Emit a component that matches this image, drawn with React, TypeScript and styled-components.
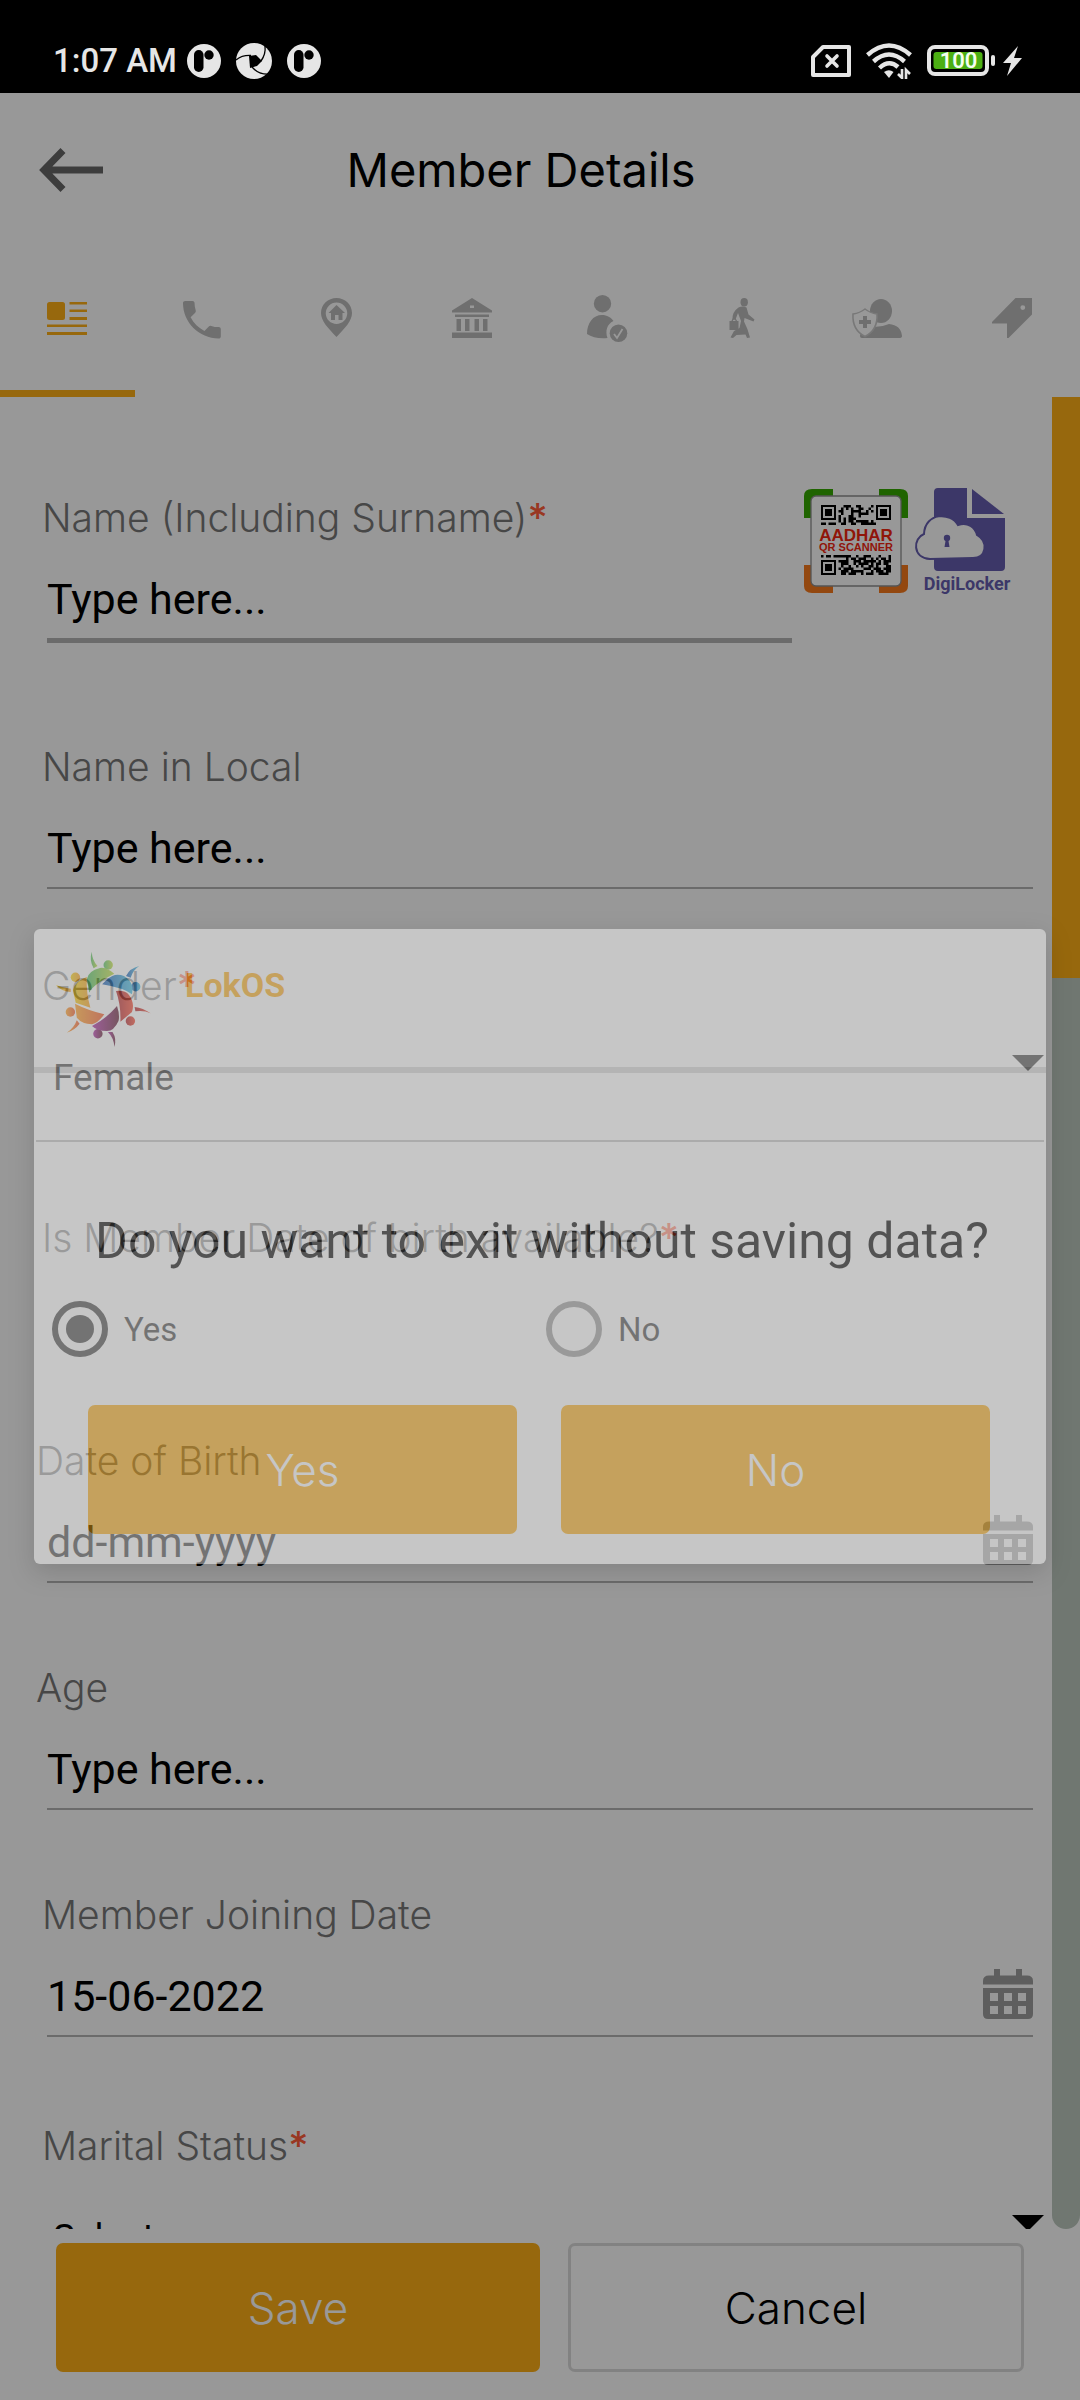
import React, { useId } from "react";
import styled, { createGlobalStyle } from "styled-components";

const amber = "#fcae17";
const line = "#b2b2b2";
const display = '"Inter", "Liberation Sans", sans-serif';
const body = '"Roboto", "Liberation Sans", sans-serif';

const GlobalStyle = createGlobalStyle`
  * { box-sizing: border-box; }
  body { margin: 0; background: #fefefe; font-family: ${body}; color: #000; }
  button, input, select { font: inherit; color: inherit; border: 0; padding: 0; margin: 0; background: none; border-radius: 0; }
  svg { display: block; flex: none; }
`;

/* ---------- shell ---------- */

const Shell = styled.div`
  height: 100vh;
  display: flex;
  flex-direction: column;
  overflow: hidden;
`;

const StatusBar = styled.div`
  flex: none;
  height: 93px;
  padding: 28px 58px 0 53px;
  display: flex;
  align-items: center;
  justify-content: space-between;
  background: #000;
  color: #e6e6e6;
`;

const StatusGroup = styled.div<{ $gap: number }>`
  display: flex;
  align-items: center;
  gap: ${(p) => p.$gap}px;
`;

const Clock = styled.span`
  font-size: 33px;
  line-height: 40px;
  font-weight: 500;
  margin-right: -5px;
`;

const Screen = styled.div`
  position: relative;
  flex: 1;
  min-height: 0;
  display: flex;
  flex-direction: column;
`;

const Header = styled.header`
  flex: none;
  height: 154px;
  padding: 0 141px 0 39px;
  display: flex;
  align-items: center;
`;

const Title = styled.h1`
  flex: 1;
  margin: 0;
  text-align: center;
  font-family: ${display};
  font-weight: 400;
  font-size: 47px;
  line-height: 56px;
`;

const IconButton = styled.button`
  display: flex;
  align-items: center;
  justify-content: center;
`;

const Tabs = styled.nav`
  flex: none;
  display: grid;
  grid-template-columns: repeat(8, 1fr);
`;

const Tab = styled.button<{ $active?: boolean }>`
  height: 150px;
  padding: 0 2px 2px 0;
  display: flex;
  align-items: center;
  justify-content: center;
  color: ${(p) => (p.$active ? amber : "#b9b9b9")};
  border-bottom: 7px solid ${(p) => (p.$active ? amber : "transparent")};
`;

/* ---------- form ---------- */

const ScrollRow = styled.div`
  flex: 1;
  min-height: 0;
  display: flex;
`;

const Form = styled.form`
  flex: 1;
  min-width: 0;
  overflow-y: auto;
  scrollbar-width: none;
  padding: 91px 8px 60px 36px;
`;

const ScrollTrack = styled.div`
  flex: none;
  width: 28px;
  background: #bbc6bd;
  border-radius: 0 0 14px 14px;
`;

const ScrollThumb = styled.div`
  height: 31.7%;
  background: ${amber};
`;

const Field = styled.div<{ $top?: number }>`
  flex: 1;
  min-width: 0;
  display: flex;
  flex-direction: column;
  gap: 28px;
  margin-top: ${(p) => p.$top ?? 0}px;
`;

const NameRow = styled.div`
  display: flex;
  align-items: flex-start;
  padding-right: 33px;
  gap: 8px;
`;

const NameCell = styled.div`
  flex: 1;
  min-width: 0;
  display: flex;
  padding-top: 8px;
  margin-right: -7px;
`;

const Label = styled.label<{ $flush?: boolean }>`
  display: block;
  padding-left: ${(p) => (p.$flush ? 0 : 6)}px;
  font-family: ${display};
  font-weight: 300;
  font-size: 39px;
  line-height: 44px;
  color: #777;
  white-space: nowrap;
`;

const Star = styled.span`
  color: #ff5c3a;
  font-weight: 500;
`;

const Underlined = styled.div<{ $bold?: boolean }>`
  display: flex;
  align-items: flex-start;
  margin: 0 11px;
  padding-bottom: 8px;
  border-bottom: ${(p) => (p.$bold ? 5 : 2)}px solid ${line};
`;

const TextInput = styled.input`
  flex: 1;
  min-width: 0;
  height: 62px;
  font-size: 43px;
  outline: none;
  &::placeholder { color: #000; opacity: 1; }
`;

const CalendarButton = styled(IconButton)`
  width: 50px;
  height: 58px;
  color: #9d9d9d;
`;

const SelectBox = styled.div`
  position: relative;
`;

const Select = styled.select`
  appearance: none;
  display: block;
  width: 100%;
  height: 106px;
  padding: 0 60px 20px 17px;
  font-size: 37px;
  line-height: 42px;
  border-bottom: 2px solid #aaa;
`;

const Caret = styled.span`
  position: absolute;
  top: 19px;
  right: 0;
  border: 16px solid transparent;
  border-top-color: #000;
  border-bottom: 0;
  pointer-events: none;
`;

const RadioGroup = styled.div`
  display: grid;
  grid-template-columns: 1fr 1fr;
  padding: 0 4px 0 16px;
`;

const RadioLabel = styled.label`
  display: flex;
  align-items: center;
  gap: 16px;
  height: 82px;
  font-size: 33px;
`;

const Radio = styled.input`
  appearance: none;
  width: 56px;
  height: 56px;
  border: 6px solid #767676;
  border-radius: 50%;
  display: grid;
  place-items: center;
  &:checked { border-color: #000; }
  &:checked::before {
    content: "";
    width: 28px;
    height: 28px;
    border-radius: 50%;
    background: #000;
  }
`;

/* ---------- actions ---------- */

const Footer = styled.footer`
  flex: none;
  display: grid;
  grid-template-columns: 484fr 456fr;
  gap: 28px;
  padding: 14px 56px 28px;
`;

const Button = styled.button<{ $outline?: boolean }>`
  height: 129px;
  border-radius: 7px;
  font-family: ${display};
  font-weight: 300;
  font-size: 44px;
  color: ${(p) => (p.$outline ? "#000" : "#fff")};
  background: ${(p) => (p.$outline ? "transparent" : amber)};
  border: ${(p) => (p.$outline ? "3px solid #d9d9d9" : "0")};
`;

/* ---------- dialog ---------- */

const Scrim = styled.div`
  position: absolute;
  inset: 0;
  display: flex;
  align-items: center;
  padding: 0 34px;
  background: rgba(0, 0, 0, 0.4);
`;

const Dialog = styled.section`
  flex: 1;
  opacity: 0.45;
  background: #fff;
  border-radius: 6px;
  box-shadow: 0 8px 24px rgba(0, 0, 0, 0.3);
`;

const DialogHead = styled.div`
  display: flex;
  align-items: flex-start;
  gap: 33px;
  height: 144px;
  padding: 22px;
  border-bottom: 6px solid #d7d7d7;
`;

const Brand = styled.strong`
  font-size: 34px;
  line-height: 68px;
  font-weight: 700;
  color: ${amber};
`;

const Question = styled.p`
  margin: 138px 0 134px;
  padding-left: 4px;
  text-align: center;
  font-size: 50px;
  line-height: 60px;
`;

const DialogActions = styled.div`
  display: grid;
  grid-template-columns: 1fr 1fr;
  gap: 44px;
  padding: 0 56px 30px 54px;
`;

/* ---------- status bar drawings ---------- */

const ParkIcon = () => (
  <svg width="34" height="34" viewBox="0 0 34 34">
    <circle cx="17" cy="17" r="17" fill="#e6e6e6" />
    <rect x="7" y="6" width="9.5" height="22" rx="4.7" fill="#000" />
    <circle cx="22" cy="11" r="4.7" fill="#000" />
  </svg>
);

const ShutterIcon = () => (
  <svg width="36" height="36" viewBox="0 0 36 36">
    <circle cx="18" cy="18" r="18" fill="#e6e6e6" />
    <path d="M13 13L20 12L26 18L21 23L14 25Z" fill="#000" />
    <g fill="none" stroke="#000" strokeWidth="1.3">
      <path d="M0 17Q6 12 15 12.500" />
      <path d="M29 3Q30 11 25 18" />
      <path d="M34 31Q23 32 16 24" />
    </g>
  </svg>
);

const SimIcon = () => (
  <svg width="40" height="32" viewBox="0 0 40 32" fill="none" stroke="#e6e6e6" strokeLinejoin="round">
    <path d="M12 2H38V30H2V12Z" strokeWidth="4" />
    <path d="M16 11L26 21M26 11L16 21" strokeWidth="3.600" strokeLinecap="round" />
  </svg>
);

const WifiIcon = () => (
  <svg width="46" height="36" viewBox="0 0 46 36" fill="none" stroke="#e6e6e6" strokeWidth="4.400">
    <path d="M1.500 12Q23 -7 44.500 12" />
    <path d="M7.500 18.500Q23 4.500 38.500 18.500" />
    <path d="M13.500 25Q23 16 32 24" />
    <path d="M18 29Q23 25.500 27.500 29L23 35Z" fill="#e6e6e6" stroke="none" />
    <path d="M36 26V35L32 31M40 36V27L44 31" strokeWidth="2.600" />
  </svg>
);

const BatteryIcon = () => (
  <svg width="68" height="31" viewBox="0 0 68 31">
    <rect x="2" y="2" width="58" height="27" rx="6" fill="none" stroke="#e6e6e6" strokeWidth="4" />
    <rect x="6.500" y="7" width="49" height="17" rx="3" fill="#4caf13" />
    <rect x="64" y="10" width="4" height="11" rx="2" fill="#e6e6e6" />
    <text x="31.500" y="23" textAnchor="middle" fontFamily="Roboto" fontWeight="600" fontSize="22" fill="#f4fff0">100</text>
  </svg>
);

const BoltIcon = () => (
  <svg width="19" height="30" viewBox="0 0 19 30">
    <path d="M15 0L0 17H8L4 30L19 12H11Z" fill="#e6e6e6" />
  </svg>
);

/* ---------- app drawings ---------- */

const BackIcon = () => (
  <svg width="64" height="44" viewBox="0 0 64 44" fill="none" stroke="#666" strokeWidth="7">
    <path d="M64 22H6M24 2.500L5 22L24 41.500" />
  </svg>
);

const tabIcons: { name: string; art: React.ReactNode }[] = [
  {
    name: "Profile",
    art: (
      <>
        <rect x="5" y="10" width="18" height="18" rx="2.500" />
        <path d="M27.500 10H45V12.500H27.500ZM27.500 17.500H45V20H27.500ZM27.500 25H45V28H27.500ZM5 32.500H45V35H5ZM5 40H45V43H5Z" />
      </>
    ),
  },
  {
    name: "Phone",
    art: (
      <path
        transform="translate(-.3 2.8) scale(2.1 2.08)"
        d="M6.620 10.790c1.440 2.830 3.760 5.140 6.590 6.590l2.200-2.200c.27-.27.67-.36 1.020-.24 1.120.37 2.330.57 3.570.57.55 0 1 .45 1 1V20c0 .55-.45 1-1 1-9.390 0-17-7.610-17-17 0-.55.45-1 1-1h3.500c.55 0 1 .45 1 1 0 1.250.2 2.450.57 3.570.11.35.03.74-.25 1.020l-2.200 2.200z"
      />
    ),
  },
  {
    name: "Address",
    art: (
      <>
        <path
          fillRule="evenodd"
          d="M24.500 6C33 6 40 12.500 40 21C40 29 33 36 24.500 45C16 36 9 29 9 21C9 12.500 16 6 24.500 6ZM24.500 10.500A10.500 10.500 0 1 0 24.500 32A10.500 10.500 0 1 0 24.500 10.500Z"
        />
        <path d="M24.500 13L33 21H30.500V28H26.500V23H23V28H19V21H16.500Z" />
      </>
    ),
  },
  {
    name: "Bank",
    art: (
      <path
        fillRule="evenodd"
        d="M5 18.500L25 6L45 18.500V20.500H5ZM23 13.500V16H27V13.500ZM8 22.500H42V25H8ZM9.500 27H14V39H9.500ZM18 27H22.500V39H18ZM27.500 27H32V39H27.500ZM36 27H40.500V39H36ZM5 40.500H45V46H5Z"
      />
    ),
  },
  {
    name: "Verification",
    art: (
      <>
        <circle cx="20.500" cy="11.700" r="8.700" />
        <path d="M5 42C5 31 11 23 20 23C25 23 29 25.500 31.500 29C25 32 23 39 25.500 46C18 47 10 45.500 5 42Z" />
        <circle cx="36.500" cy="41.300" r="8.800" />
        <path d="M32 42L35 46L40.500 37" fill="none" stroke="#fefefe" strokeWidth="1.800" />
      </>
    ),
  },
  {
    name: "Occupation",
    art: (
      <>
        <ellipse cx="27.200" cy="10.300" rx="3.700" ry="4.200" />
        <path d="M21.500 15.500Q25.500 13.500 29.500 15.500L31.500 22.500L37.500 27.500L36.500 29.500L27.500 26L27 29.500Q31 37 33 45.500L30 46L28.500 42.500L19.500 43L16 46L13.500 45.500L17 39L22.500 36L24 29L21 21L18.500 27.500H15.500Q15 20 21.500 15.500Z" />
        <path d="M12.500 29H21.500V38H12.500Z" />
        <path d="M15 29Q17 24 19.500 29" fill="none" stroke="currentColor" strokeWidth="1.300" />
      </>
    ),
  },
  {
    name: "Insurance",
    art: (
      <>
        <ellipse cx="29" cy="19" rx="11" ry="12" />
        <path d="M8 44Q8 38 17 34Q28 36 37 32Q49 33 50 44Q50 46 47 46H10Q8 46 8 44Z" />
        <path d="M13 17Q18 21 25 22Q26 38 13 44.500Q0 38 1 22Q8 21 13 17Z" fill="#fefefe" stroke="#c9c9c9" strokeWidth="1.600" />
        <path d="M11 24H15V28H19V32H15V36H11V32H7V28H11Z" />
      </>
    ),
  },
  {
    name: "Tags",
    art: (
      <path
        fillRule="evenodd"
        d="M28.500 6H45V22.500L21.500 46H20V31.500H5V30ZM35.800 13.200A2.400 2.400 0 1 0 35.800 18A2.400 2.400 0 1 0 35.800 13.200Z"
      />
    ),
  },
];

const CalendarIcon = () => (
  <svg width="50" height="50" viewBox="0 0 50 50" fill="currentColor">
    <path d="M11 0H17V6.500H33V0H39V6.500H44Q50 6.500 50 12V15.500H0V12Q0 6.500 6 6.500H11Z" />
    <path
      fillRule="evenodd"
      d="M0 19H50V45Q50 50 45 50H5Q0 50 0 45ZM7 24V32H15V24ZM21 24V32H29V24ZM35 24V32H43V24ZM7 37V45H15V37ZM21 37V45H29V37ZM35 37V45H43V37Z"
    />
  </svg>
);

/* Filler modules of the code between its three finder squares. */
const modules = (() => {
  const cells: string[] = [];
  let seed = 41;
  const size = 2.5;
  for (let row = 0; row < 28; row++) {
    for (let col = 0; col < 28; col++) {
      seed = (seed * 1103515245 + 12345) % 2147483648;
      const dark = seed / 2147483648 > 0.45;
      const inGap = row > 7 && row < 20;
      const inFinder = (row < 7 && (col < 7 || col > 20)) || (row > 20 && col < 7);
      if (dark && !inGap && !inFinder) {
        cells.push(`M${17 + col * size} ${17 + row * size}h${size}v${size}h-${size}z`);
      }
    }
  }
  return cells.join("");
})();

const Finder = ({ x, y }: { x: number; y: number }) => (
  <>
    <rect x={x + 1} y={y + 1} width="13" height="13" fill="none" stroke="#000" strokeWidth="2" />
    <rect x={x + 4} y={y + 4} width="7" height="7" />
  </>
);

const AadharIcon = () => (
  <svg width="104" height="106" viewBox="0 0 104 106">
    <path d="M0 30V8Q0 1 8 1H29V30ZM104 30V8Q104 1 96 1H75V30Z" fill="#34a700" />
    <path d="M0 77V98Q0 105 8 105H29V77ZM104 77V98Q104 105 96 105H75V77Z" fill="#f5781c" />
    <rect x="7" y="8" width="90" height="90" rx="5" fill="#fefefe" stroke="#8d8d8d" strokeWidth="1.300" />
    <path d={modules} />
    <Finder x={17} y={17} />
    <Finder x={72} y={17} />
    <Finder x={17} y={72} />
    <g fill="#f0260f" fontFamily="Liberation Sans, sans-serif" fontWeight="700" textAnchor="middle">
      <text x="52" y="53" fontSize="17">AADHAR</text>
      <text x="52" y="63" fontSize="11">QR SCANNER</text>
    </g>
  </svg>
);

const DigiLockerIcon = () => (
  <svg width="95" height="106" viewBox="0 0 95 106" overflow="visible" fill="#645cad">
    <path d="M22 0H51V30H89V79Q89 83 85 83H22Q18 83 18 79V4Q18 0 22 0Z" />
    <path d="M56 1L88 26H56Z" />
    <path
      d="M14 71C-4 70 -3 50 8 46C9 24 35 24 42 37C52 34 59 39 61 47C73 54 70 70 57 70Z"
      fill="#fefefe"
      stroke="#645cad"
      strokeWidth="2"
    />
    <circle cx="31" cy="50" r="3.200" />
    <path d="M30 50H32L33.500 59H28.500Z" />
    <text x="51" y="102" textAnchor="middle" fontFamily="Roboto, Liberation Sans, sans-serif" fontWeight="700" fontSize="18">
      DigiLocker
    </text>
  </svg>
);

const people = [
  { from: "#3ab650", to: "#b9d52a", head: [52.2, 14], arm: "M35.800 .7Q36 9 41.500 15L37.600 17.300Q33 9 35.800 .7Z", torso: "M58.300 22.700Q50 16 44 17Q32 20 30.800 28.300L33.300 41.700Q36 34 58.300 22.700Z" },
  { from: "#0a4fae", to: "#38bde0", head: [79.700, 35.700], arm: "M83.300 15Q77 19 74.700 26.700L70 25Q74 17 83.300 15Z", torso: "M46.100 33.300Q54 25 59 24Q68 23 73 29Q78 35 76 43.300Q68 37 46.100 33.300Z" },
  { from: "#a51018", to: "#f53a20", head: [74.400, 70], arm: "M94.700 62.300Q87 57 78.600 56L79.400 60.300Q88 59 94.700 62.300Z", torso: "M60 40Q69 39 73 44Q79 52 76 61L64.400 70.700Q65 54 60 40Z" },
  { from: "#a3189a", to: "#50081e", head: [41.900, 82.700], arm: "M58.300 96Q58 87 51.900 81H56.500Q61 88 58.300 96Z", torso: "M36 75Q50 68 61 55Q64 64 62.500 70Q58 80 51 80Q41 80 36 75Z" },
  { from: "#ff9a14", to: "#f04a18", head: [14.400, 61], arm: "M10.800 81.700Q18 77 20.800 69.300L23.600 72.700Q19 79 10.800 81.700Z", torso: "M19 52.700Q31 59 48.300 63.300Q42 72 36 73.300Q26 73 20.800 66.700Z" },
  { from: "#f8d000", to: "#fa9a14", head: [19.400, 26.300], arm: "M0 34Q7 37 14.700 37.700V41Q6 41 0 34Z", torso: "M30.800 26Q19 30 17 39L19.700 51.700L34.400 56.700Q30 42 30.800 26Z" },
] as const;

const LokOSLogo = () => (
  <svg width="96" height="96" viewBox="0 0 96 96" role="img" aria-label="LokOS logo">
    {people.map((p, i) => (
      <g key={i} fill={`url(#person-${i})`}>
        <linearGradient id={`person-${i}`} x1="0" y1="0" x2="1" y2="0">
          <stop offset="0" stopColor={p.from} />
          <stop offset="1" stopColor={p.to} />
        </linearGradient>
        <circle cx={p.head[0]} cy={p.head[1]} r="4.700" />
        <path d={p.arm} />
        <path d={p.torso} />
      </g>
    ))}
  </svg>
);

/* ---------- fields ---------- */

type FieldProps = {
  label: string;
  required?: boolean;
  flush?: boolean;
  bold?: boolean;
  top?: number;
  placeholder?: string;
  value?: string;
  calendar?: boolean;
};

const TextField = ({ label, required, flush, bold, top, placeholder, value, calendar }: FieldProps) => {
  const id = useId();
  return (
    <Field $top={top}>
      <Label htmlFor={id} $flush={flush}>
        {label}
        {required && <Star>*</Star>}
      </Label>
      <Underlined $bold={bold}>
        <TextInput id={id} type="text" placeholder={placeholder} defaultValue={value} />
        {calendar && (
          <CalendarButton type="button" aria-label={`Pick ${label}`}>
            <CalendarIcon />
          </CalendarButton>
        )}
      </Underlined>
    </Field>
  );
};

const SelectField = ({ label, top, options }: { label: string; top: number; options: string[] }) => {
  const id = useId();
  return (
    <Field $top={top}>
      <Label htmlFor={id}>
        {label}
        <Star>*</Star>
      </Label>
      <SelectBox>
        <Select id={id}>
          {options.map((o) => (
            <option key={o}>{o}</option>
          ))}
        </Select>
        <Caret />
      </SelectBox>
    </Field>
  );
};

export default function App() {
  return (
    <Shell>
      <GlobalStyle />
      <StatusBar>
        <StatusGroup $gap={15}>
          <Clock>1:07 AM</Clock>
          <ParkIcon />
          <ShutterIcon />
          <ParkIcon />
        </StatusGroup>
        <StatusGroup $gap={15}>
          <SimIcon />
          <WifiIcon />
          <StatusGroup $gap={8}>
            <BatteryIcon />
            <BoltIcon />
          </StatusGroup>
        </StatusGroup>
      </StatusBar>

      <Screen>
        <Header>
          <IconButton type="button" aria-label="Back">
            <BackIcon />
          </IconButton>
          <Title>Member Details</Title>
        </Header>

        <Tabs>
          {tabIcons.map((t, i) => (
            <Tab key={t.name} type="button" aria-label={t.name} $active={i === 0}>
              <svg width="50" height="52" viewBox="0 0 50 52" fill="currentColor" overflow="visible">
                {t.art}
              </svg>
            </Tab>
          ))}
        </Tabs>

        <ScrollRow>
          <Form>
            <NameRow>
              <NameCell>
                <TextField label="Name (Including Surname)" required bold placeholder="Type here..." />
              </NameCell>
              <IconButton type="button" aria-label="Aadhar QR scanner">
                <AadharIcon />
              </IconButton>
              <IconButton type="button" aria-label="DigiLocker">
                <DigiLockerIcon />
              </IconButton>
            </NameRow>
            <TextField label="Name in Local" top={102} placeholder="Type here..." />
            <SelectField label="Gender" top={75} options={["Female", "Male", "Other"]} />
            <Field $top={74} role="radiogroup" aria-labelledby="dob-known">
              <Label as="div" id="dob-known">
                Is Member Date of birth available?<Star>*</Star>
              </Label>
              <RadioGroup>
                <RadioLabel>
                  <Radio type="radio" name="dobKnown" defaultChecked />
                  Yes
                </RadioLabel>
                <RadioLabel>
                  <Radio type="radio" name="dobKnown" />
                  No
                </RadioLabel>
              </RadioGroup>
            </Field>
            <TextField label="Date of Birth" flush top={69} placeholder="dd-mm-yyyy" calendar />
            <TextField label="Age" flush top={83} placeholder="Type here..." />
            <TextField label="Member Joining Date" top={83} value="15-06-2022" calendar />
            <SelectField label="Marital Status" top={87} options={["Select", "Married", "Unmarried"]} />
          </Form>
          <ScrollTrack>
            <ScrollThumb />
          </ScrollTrack>
        </ScrollRow>

        <Footer>
          <Button type="button">Save</Button>
          <Button type="button" $outline>
            Cancel
          </Button>
        </Footer>

        <Scrim>
          <Dialog role="dialog" aria-modal="true" aria-labelledby="exit-question">
            <DialogHead>
              <LokOSLogo />
              <Brand>LokOS</Brand>
            </DialogHead>
            <Question id="exit-question">Do you want to exit without saving data?</Question>
            <DialogActions>
              <Button type="button">Yes</Button>
              <Button type="button">No</Button>
            </DialogActions>
          </Dialog>
        </Scrim>
      </Screen>
    </Shell>
  );
}
